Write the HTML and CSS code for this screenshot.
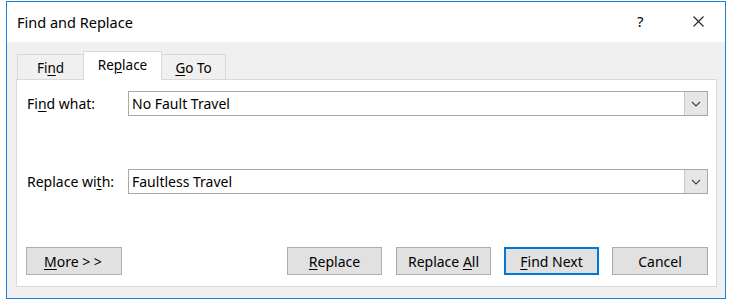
FILE: index.html
```html
<!DOCTYPE html>
<html>
<head>
<meta charset="utf-8">
<link rel="stylesheet" href="styles.css">
</head>
<body>
<div class="window">
  <div class="titlebar">
    <div class="title">Find and Replace</div>
    <div class="help">?</div>
    <div class="close">
      <svg width="11" height="11" viewBox="0 0 11 11"><path d="M0.5 0.5 L10.5 10.5 M10.5 0.5 L0.5 10.5" stroke="#222" stroke-width="1.1" fill="none"/></svg>
    </div>
  </div>
  <div class="body">
    <div class="tabs">
      <div class="tab tab-find"><span>Fi<u>n</u>d</span></div>
      <div class="tab tab-active"><span>Re<u>p</u>lace</span></div>
      <div class="tab tab-goto"><span><u>G</u>o To</span></div>
    </div>
    <div class="panel">
      <div class="row">
        <div class="label">Fi<u>n</u>d what:</div>
        <div class="combo">
          <div class="combo-text">No Fault Travel</div>
          <div class="combo-btn"><svg width="10" height="6" viewBox="0 0 10 6"><path d="M1 1 L5 5 L9 1" stroke="#444" stroke-width="1.2" fill="none"/></svg></div>
        </div>
      </div>
      <div class="row row-replace">
        <div class="label">Replace wi<u>t</u>h:</div>
        <div class="combo">
          <div class="combo-text">Faultless Travel</div>
          <div class="combo-btn"><svg width="10" height="6" viewBox="0 0 10 6"><path d="M1 1 L5 5 L9 1" stroke="#444" stroke-width="1.2" fill="none"/></svg></div>
        </div>
      </div>
      <div class="buttons">
        <div class="btn btn-more"><span><u>M</u>ore &gt; &gt;</span></div>
        <div class="spacer"></div>
        <div class="btn btn-replace"><span><u>R</u>eplace</span></div>
        <div class="btn btn-all"><span>Replace <u>A</u>ll</span></div>
        <div class="btn btn-next"><span><u>F</u>ind Next</span></div>
        <div class="btn btn-cancel"><span>Cancel</span></div>
      </div>
    </div>
  </div>
</div>
</body>
</html>
```

FILE: styles.css
```css
html, body {
  margin: 0;
  padding: 0;
  background: #ffffff;
}
body {
  font-family: "Noto Sans", "Open Sans", sans-serif;
  color: #000;
}
u {
  text-decoration: underline;
  text-underline-offset: 2px;
  text-decoration-thickness: 1px;
}
.window {
  margin: 1px 0 0 6px;
  width: 718px;
  height: 296px;
  border: 1px solid #1b80d8;
  display: flex;
  flex-direction: column;
  background: #f0f0f0;
}
.titlebar {
  height: 40px;
  background: #fff;
  display: flex;
  align-items: center;
  flex: none;
}
.title {
  font-size: 14.5px;
  padding-left: 10px;
  flex: 1;
  margin-top: -1px;
}
.help {
  font-size: 15px;
  width: 12px;
  margin-right: 44px;
  margin-top: -2px;
}
.close {
  width: 11px;
  height: 11px;
  margin-right: 21px;
  margin-top: -1px;
}
.close svg {
  display: block;
}
.body {
  flex: 1;
  padding: 9px 8px 0 9px;
  display: flex;
  flex-direction: column;
}
.tabs {
  display: flex;
  align-items: flex-end;
  height: 28px;
  padding-left: 1px;
  position: relative;
  z-index: 1;
}
.tab {
  height: 25px;
  box-sizing: border-box;
  border: 1px solid #d9d9d9;
  border-bottom: none;
  background: #f0f0f0;
  font-size: 13.5px;
  display: flex;
  align-items: center;
  justify-content: center;
  padding-top: 2px;
}
.tab-find {
  width: 66px;
  border-right: none;
}
.tab-active {
  width: 79px;
  height: 29px;
  background: #fff;
  margin-bottom: -1px;
  padding-top: 0;
  padding-bottom: 2px;
}
.tab-goto {
  width: 64px;
  border-left: none;
}
.panel {
  border: 1px solid #d9d9d9;
  background: #fff;
  padding: 11px 8px 0 10px;
  box-sizing: border-box;
  height: 208px;
}
.row {
  display: flex;
  align-items: center;
  height: 25px;
}
.row-replace {
  margin-top: 53px;
}
.label {
  width: 101px;
  font-size: 14px;
}
.combo {
  width: 580px;
  height: 25px;
  box-sizing: border-box;
  border: 1px solid #a8a8a8;
  display: flex;
  align-items: stretch;
}
.combo-text {
  flex: 1;
  font-size: 14px;
  padding-left: 3px;
  display: flex;
  align-items: center;
}
.combo-btn {
  width: 22px;
  background: #e6e6e6;
  border-left: 1px solid #c8c8c8;
  display: flex;
  align-items: center;
  justify-content: center;
}
.buttons {
  display: flex;
  margin-top: 53px;
}
.spacer {
  flex: 1;
}
.btn {
  width: 96px;
  height: 28px;
  box-sizing: border-box;
  border: 1px solid #adadad;
  background: #e1e1e1;
  font-size: 14px;
  display: flex;
  align-items: center;
  justify-content: center;
}
.btn-more {
  width: 96px;
  margin-left: -1px;
  justify-content: flex-start;
  padding-left: 17px;
}
.btn-replace {
  width: 95px;
  margin-right: 14px;
}
.btn-all {
  width: 95px;
  margin-right: 13px;
}
.btn-next {
  width: 95px;
  border: 2px solid #0078d7;
  margin-right: 13px;
}
.btn-cancel {
  width: 96px;
}
```
